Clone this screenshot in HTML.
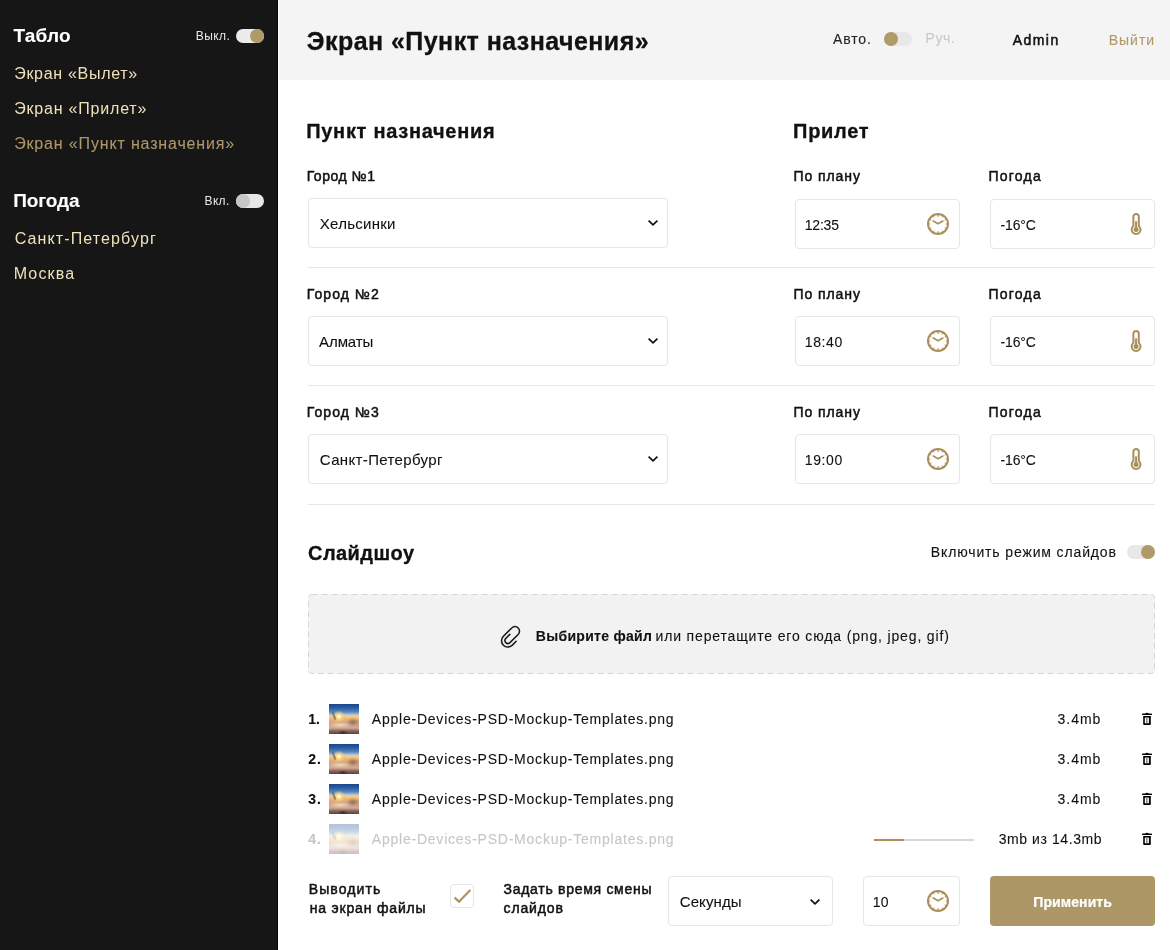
<!DOCTYPE html>
<html lang="ru">
<head>
<meta charset="utf-8">
<title>Экран «Пункт назначения»</title>
<style>
*{margin:0;padding:0;box-sizing:border-box}
html,body{width:1170px;height:950px;overflow:hidden;background:#fff;font-family:"Liberation Sans",sans-serif;color:#111}
.tx{position:absolute;white-space:nowrap;-webkit-text-stroke:0.1px currentColor}
.r{position:absolute}
.box{position:absolute;height:50px;border:1px solid #e6e6e6;border-radius:4px;background:#fff}
.tog{position:absolute;width:28px;height:14px;border-radius:7px;background:#e9e9e9}
.tog i{position:absolute;top:0;width:14px;height:14px;border-radius:50%;background:#b09a68}
.hr{position:absolute;left:308px;width:847px;height:1px;background:#e8e8e8}
.ic{position:absolute;overflow:visible}
.thumb{position:absolute;width:30px;height:30px;overflow:hidden;
 background:
  radial-gradient(circle at 10px 12.5px,#fffef4 0,#fff3c8 1.4px,rgba(255,212,120,.8) 2.8px,rgba(255,195,100,0) 6px),
  radial-gradient(ellipse 5px 3px at 14px 29px,rgba(40,25,25,.75),rgba(40,25,25,0)),
  radial-gradient(ellipse 7px 4px at 24px 18px,rgba(95,70,65,.6),rgba(95,70,65,0)),
  radial-gradient(ellipse 12px 3px at 11px 21px,rgba(255,236,205,.75),rgba(255,236,205,0)),
  linear-gradient(180deg,#1a4688 0,#2b5ea3 4px,#5a87bd 8px,#b0c0cc 10.5px,#ead2a4 12px,#f0bd72 14px,#deac78 17px,#caa28a 21px,#d4aa90 24px,#86625c 27px,#5a4242 30px)}
.thumb b{position:absolute;left:4px;top:8px;width:1.7px;height:8px;background:rgba(70,55,50,.5);transform:rotate(-22deg);border-radius:1px}
</style>
</head>
<body>
<div id="app" style="position:absolute;left:0;top:0;width:1170px;height:950px;background:#fff;will-change:transform">
<!-- sidebar -->
<div class="r" style="left:0;top:0;width:277px;height:950px;background:#161616"></div>
<div class="r" style="left:277px;top:0;width:1px;height:950px;background:#050505"></div>
<div class="tog" style="left:236px;top:29px;background:#ececec"><i style="left:14px"></i></div>
<div class="tog" style="left:236px;top:194px;background:#e6e6e6"><i style="left:0;background:#c6c6c6"></i></div>

<!-- header -->
<div class="r" style="left:279px;top:0;width:891px;height:80px;background:#f4f4f4"></div>
<div class="tog" style="left:884px;top:32px;background:#e8e8e8"><i style="left:0"></i></div>

<!-- form rows -->
<div class="box" style="left:308px;top:198px;width:360px"></div>
<div class="box" style="left:795px;top:199px;width:165px"></div>
<div class="box" style="left:990px;top:199px;width:165px"></div>
<div class="hr" style="top:267px"></div>
<div class="box" style="left:308px;top:316px;width:360px"></div>
<div class="box" style="left:795px;top:316px;width:165px"></div>
<div class="box" style="left:990px;top:316px;width:165px"></div>
<div class="hr" style="top:385px"></div>
<div class="box" style="left:308px;top:434px;width:360px"></div>
<div class="box" style="left:795px;top:434px;width:165px"></div>
<div class="box" style="left:990px;top:434px;width:165px"></div>
<div class="hr" style="top:504px"></div>

<!-- slideshow -->
<div class="tog" style="left:1127px;top:545px;background:#e8e8e8"><i style="left:14px"></i></div>
<svg class="ic" style="left:308px;top:594px" width="847" height="80"><rect x="0.5" y="0.5" width="846" height="79" rx="3" ry="3" fill="#f2f2f2" stroke="#d6d6d6" stroke-width="1" stroke-dasharray="6 4"/></svg>

<div class="thumb" style="left:329px;top:704px"><b></b></div>
<div class="thumb" style="left:329px;top:744px"><b></b></div>
<div class="thumb" style="left:329px;top:784px"><b></b></div>
<div class="thumb" style="left:329px;top:824px;opacity:.32"><b></b></div>
<div class="r" style="left:874px;top:839px;width:100px;height:2px;background:#d6d6d6"></div>
<div class="r" style="left:874px;top:839px;width:30px;height:2px;background:#ab8f5a"></div>

<!-- bottom -->
<div class="r" style="left:450px;top:884px;width:24px;height:24px;border:1px solid #e6e6e6;border-radius:4px"></div>
<div class="box" style="left:668px;top:876px;width:165px"></div>
<div class="box" style="left:863px;top:876px;width:97px"></div>
<div class="r" style="left:990px;top:876px;width:165px;height:50px;background:#ae9766;border-radius:4px"></div>

<!-- icons -->
<svg class="ic" style="left:646.5px;top:219.4px" width="12" height="8" viewBox="0 0 12 8"><polyline points="1.6,1.7 6,5.9 10.4,1.7" fill="none" stroke="#111" stroke-width="1.75"/></svg>
<svg class="ic" style="left:646.5px;top:337.4px" width="12" height="8" viewBox="0 0 12 8"><polyline points="1.6,1.7 6,5.9 10.4,1.7" fill="none" stroke="#111" stroke-width="1.75"/></svg>
<svg class="ic" style="left:646.5px;top:455.4px" width="12" height="8" viewBox="0 0 12 8"><polyline points="1.6,1.7 6,5.9 10.4,1.7" fill="none" stroke="#111" stroke-width="1.75"/></svg>
<svg class="ic" style="left:927px;top:213px" width="22" height="22" viewBox="0 0 22 22"><circle cx="11" cy="11" r="10" fill="none" stroke="#a88f5c" stroke-width="2"/><line x1="11.00" y1="3.80" x2="11.00" y2="1.80" stroke="#a88f5c" stroke-width="1.3"/><line x1="14.80" y1="4.42" x2="15.60" y2="3.03" stroke="#a88f5c" stroke-width="0.9"/><line x1="17.58" y1="7.20" x2="18.97" y2="6.40" stroke="#a88f5c" stroke-width="0.9"/><line x1="18.60" y1="11.00" x2="20.20" y2="11.00" stroke="#a88f5c" stroke-width="0.9"/><line x1="17.58" y1="14.80" x2="18.97" y2="15.60" stroke="#a88f5c" stroke-width="0.9"/><line x1="14.80" y1="17.58" x2="15.60" y2="18.97" stroke="#a88f5c" stroke-width="0.9"/><line x1="11.00" y1="18.20" x2="11.00" y2="20.20" stroke="#a88f5c" stroke-width="1.3"/><line x1="7.20" y1="17.58" x2="6.40" y2="18.97" stroke="#a88f5c" stroke-width="0.9"/><line x1="4.42" y1="14.80" x2="3.03" y2="15.60" stroke="#a88f5c" stroke-width="0.9"/><line x1="3.40" y1="11.00" x2="1.80" y2="11.00" stroke="#a88f5c" stroke-width="0.9"/><line x1="4.42" y1="7.20" x2="3.03" y2="6.40" stroke="#a88f5c" stroke-width="0.9"/><line x1="7.20" y1="4.42" x2="6.40" y2="3.03" stroke="#a88f5c" stroke-width="0.9"/><polyline points="6.3,8 11,10.8 15.9,8" fill="none" stroke="#a88f5c" stroke-width="1.6" stroke-linecap="round" stroke-linejoin="round"/></svg>
<svg class="ic" style="left:1130px;top:213px" width="12" height="23" viewBox="0 0 12 23"><path d="M3.4,13.06 V3.6 A2.7,2.7 0 0 1 8.8,3.6 V13.06 A4.45,4.45 0 1 1 3.4,13.06 Z" fill="none" stroke="#a88f5c" stroke-width="2"/><circle cx="6.1" cy="16.6" r="2.5" fill="#a88f5c"/><rect x="5.1" y="8.3" width="2" height="9" fill="#a88f5c"/></svg>
<svg class="ic" style="left:927px;top:330px" width="22" height="22" viewBox="0 0 22 22"><circle cx="11" cy="11" r="10" fill="none" stroke="#a88f5c" stroke-width="2"/><line x1="11.00" y1="3.80" x2="11.00" y2="1.80" stroke="#a88f5c" stroke-width="1.3"/><line x1="14.80" y1="4.42" x2="15.60" y2="3.03" stroke="#a88f5c" stroke-width="0.9"/><line x1="17.58" y1="7.20" x2="18.97" y2="6.40" stroke="#a88f5c" stroke-width="0.9"/><line x1="18.60" y1="11.00" x2="20.20" y2="11.00" stroke="#a88f5c" stroke-width="0.9"/><line x1="17.58" y1="14.80" x2="18.97" y2="15.60" stroke="#a88f5c" stroke-width="0.9"/><line x1="14.80" y1="17.58" x2="15.60" y2="18.97" stroke="#a88f5c" stroke-width="0.9"/><line x1="11.00" y1="18.20" x2="11.00" y2="20.20" stroke="#a88f5c" stroke-width="1.3"/><line x1="7.20" y1="17.58" x2="6.40" y2="18.97" stroke="#a88f5c" stroke-width="0.9"/><line x1="4.42" y1="14.80" x2="3.03" y2="15.60" stroke="#a88f5c" stroke-width="0.9"/><line x1="3.40" y1="11.00" x2="1.80" y2="11.00" stroke="#a88f5c" stroke-width="0.9"/><line x1="4.42" y1="7.20" x2="3.03" y2="6.40" stroke="#a88f5c" stroke-width="0.9"/><line x1="7.20" y1="4.42" x2="6.40" y2="3.03" stroke="#a88f5c" stroke-width="0.9"/><polyline points="6.3,8 11,10.8 15.9,8" fill="none" stroke="#a88f5c" stroke-width="1.6" stroke-linecap="round" stroke-linejoin="round"/></svg>
<svg class="ic" style="left:1130px;top:330px" width="12" height="23" viewBox="0 0 12 23"><path d="M3.4,13.06 V3.6 A2.7,2.7 0 0 1 8.8,3.6 V13.06 A4.45,4.45 0 1 1 3.4,13.06 Z" fill="none" stroke="#a88f5c" stroke-width="2"/><circle cx="6.1" cy="16.6" r="2.5" fill="#a88f5c"/><rect x="5.1" y="8.3" width="2" height="9" fill="#a88f5c"/></svg>
<svg class="ic" style="left:927px;top:448px" width="22" height="22" viewBox="0 0 22 22"><circle cx="11" cy="11" r="10" fill="none" stroke="#a88f5c" stroke-width="2"/><line x1="11.00" y1="3.80" x2="11.00" y2="1.80" stroke="#a88f5c" stroke-width="1.3"/><line x1="14.80" y1="4.42" x2="15.60" y2="3.03" stroke="#a88f5c" stroke-width="0.9"/><line x1="17.58" y1="7.20" x2="18.97" y2="6.40" stroke="#a88f5c" stroke-width="0.9"/><line x1="18.60" y1="11.00" x2="20.20" y2="11.00" stroke="#a88f5c" stroke-width="0.9"/><line x1="17.58" y1="14.80" x2="18.97" y2="15.60" stroke="#a88f5c" stroke-width="0.9"/><line x1="14.80" y1="17.58" x2="15.60" y2="18.97" stroke="#a88f5c" stroke-width="0.9"/><line x1="11.00" y1="18.20" x2="11.00" y2="20.20" stroke="#a88f5c" stroke-width="1.3"/><line x1="7.20" y1="17.58" x2="6.40" y2="18.97" stroke="#a88f5c" stroke-width="0.9"/><line x1="4.42" y1="14.80" x2="3.03" y2="15.60" stroke="#a88f5c" stroke-width="0.9"/><line x1="3.40" y1="11.00" x2="1.80" y2="11.00" stroke="#a88f5c" stroke-width="0.9"/><line x1="4.42" y1="7.20" x2="3.03" y2="6.40" stroke="#a88f5c" stroke-width="0.9"/><line x1="7.20" y1="4.42" x2="6.40" y2="3.03" stroke="#a88f5c" stroke-width="0.9"/><polyline points="6.3,8 11,10.8 15.9,8" fill="none" stroke="#a88f5c" stroke-width="1.6" stroke-linecap="round" stroke-linejoin="round"/></svg>
<svg class="ic" style="left:1130px;top:448px" width="12" height="23" viewBox="0 0 12 23"><path d="M3.4,13.06 V3.6 A2.7,2.7 0 0 1 8.8,3.6 V13.06 A4.45,4.45 0 1 1 3.4,13.06 Z" fill="none" stroke="#a88f5c" stroke-width="2"/><circle cx="6.1" cy="16.6" r="2.5" fill="#a88f5c"/><rect x="5.1" y="8.3" width="2" height="9" fill="#a88f5c"/></svg>
<svg class="ic" style="left:808.6px;top:897.5px" width="12" height="8" viewBox="0 0 12 8"><polyline points="1.6,1.7 6,5.9 10.4,1.7" fill="none" stroke="#111" stroke-width="1.75"/></svg>
<svg class="ic" style="left:927px;top:890px" width="22" height="22" viewBox="0 0 22 22"><circle cx="11" cy="11" r="10" fill="none" stroke="#a88f5c" stroke-width="2"/><line x1="11.00" y1="3.80" x2="11.00" y2="1.80" stroke="#a88f5c" stroke-width="1.3"/><line x1="14.80" y1="4.42" x2="15.60" y2="3.03" stroke="#a88f5c" stroke-width="0.9"/><line x1="17.58" y1="7.20" x2="18.97" y2="6.40" stroke="#a88f5c" stroke-width="0.9"/><line x1="18.60" y1="11.00" x2="20.20" y2="11.00" stroke="#a88f5c" stroke-width="0.9"/><line x1="17.58" y1="14.80" x2="18.97" y2="15.60" stroke="#a88f5c" stroke-width="0.9"/><line x1="14.80" y1="17.58" x2="15.60" y2="18.97" stroke="#a88f5c" stroke-width="0.9"/><line x1="11.00" y1="18.20" x2="11.00" y2="20.20" stroke="#a88f5c" stroke-width="1.3"/><line x1="7.20" y1="17.58" x2="6.40" y2="18.97" stroke="#a88f5c" stroke-width="0.9"/><line x1="4.42" y1="14.80" x2="3.03" y2="15.60" stroke="#a88f5c" stroke-width="0.9"/><line x1="3.40" y1="11.00" x2="1.80" y2="11.00" stroke="#a88f5c" stroke-width="0.9"/><line x1="4.42" y1="7.20" x2="3.03" y2="6.40" stroke="#a88f5c" stroke-width="0.9"/><line x1="7.20" y1="4.42" x2="6.40" y2="3.03" stroke="#a88f5c" stroke-width="0.9"/><polyline points="6.3,8 11,10.8 15.9,8" fill="none" stroke="#a88f5c" stroke-width="1.6" stroke-linecap="round" stroke-linejoin="round"/></svg>
<svg class="ic" style="left:1142px;top:712px" width="10" height="14" viewBox="0 0 10 14"><path d="M0,3.0 V2.3 Q0,1.6 0.8,1.6 H3.3 Q3.8,0.8 5,0.8 Q6.2,0.8 6.7,1.6 H9.2 Q10,1.6 10,2.3 V3.0 Z" fill="#000"/><path d="M1.2,4 H8.8 V11.9 Q8.8,12.9 7.8,12.9 H2.2 Q1.2,12.9 1.2,11.9 Z" fill="#000"/><rect x="2.8" y="5.6" width="4.1" height="5.6" fill="#fff"/><rect x="4.1" y="5.6" width="1.5" height="5.6" fill="#8a8a8a"/></svg>
<svg class="ic" style="left:1142px;top:752px" width="10" height="14" viewBox="0 0 10 14"><path d="M0,3.0 V2.3 Q0,1.6 0.8,1.6 H3.3 Q3.8,0.8 5,0.8 Q6.2,0.8 6.7,1.6 H9.2 Q10,1.6 10,2.3 V3.0 Z" fill="#000"/><path d="M1.2,4 H8.8 V11.9 Q8.8,12.9 7.8,12.9 H2.2 Q1.2,12.9 1.2,11.9 Z" fill="#000"/><rect x="2.8" y="5.6" width="4.1" height="5.6" fill="#fff"/><rect x="4.1" y="5.6" width="1.5" height="5.6" fill="#8a8a8a"/></svg>
<svg class="ic" style="left:1142px;top:792px" width="10" height="14" viewBox="0 0 10 14"><path d="M0,3.0 V2.3 Q0,1.6 0.8,1.6 H3.3 Q3.8,0.8 5,0.8 Q6.2,0.8 6.7,1.6 H9.2 Q10,1.6 10,2.3 V3.0 Z" fill="#000"/><path d="M1.2,4 H8.8 V11.9 Q8.8,12.9 7.8,12.9 H2.2 Q1.2,12.9 1.2,11.9 Z" fill="#000"/><rect x="2.8" y="5.6" width="4.1" height="5.6" fill="#fff"/><rect x="4.1" y="5.6" width="1.5" height="5.6" fill="#8a8a8a"/></svg>
<svg class="ic" style="left:1142px;top:832px" width="10" height="14" viewBox="0 0 10 14"><path d="M0,3.0 V2.3 Q0,1.6 0.8,1.6 H3.3 Q3.8,0.8 5,0.8 Q6.2,0.8 6.7,1.6 H9.2 Q10,1.6 10,2.3 V3.0 Z" fill="#000"/><path d="M1.2,4 H8.8 V11.9 Q8.8,12.9 7.8,12.9 H2.2 Q1.2,12.9 1.2,11.9 Z" fill="#000"/><rect x="2.8" y="5.6" width="4.1" height="5.6" fill="#fff"/><rect x="4.1" y="5.6" width="1.5" height="5.6" fill="#8a8a8a"/></svg>
<svg class="ic" style="left:490px;top:615px" width="40" height="40" viewBox="0 0 40 40"><path d="M26.2,26.3 L22.1,30.4 A6.3,6.3 0 0 1 13.2,21.5 L21.75,12.95 A4.5,4.5 0 0 1 28.15,19.45 L19.7,27.9 A3,3 0 0 1 15.5,23.7 L19.8,19.4" fill="none" stroke="#1a1a1a" stroke-width="1.55" stroke-linecap="round"/></svg>
<svg class="ic" style="left:450px;top:884px" width="24" height="24" viewBox="0 0 24 24"><polyline points="4.5,13.5 9,17.7 20.3,6" fill="none" stroke="#ad9563" stroke-width="2.3"/></svg>

<!-- texts -->
<div class="tx" style="left:13.50px;top:26px;font-size:19px;line-height:19px;letter-spacing:0.180px;color:#fff;font-weight:bold;-webkit-text-stroke:0.1px">Табло</div>
<div class="tx" style="left:195.80px;top:30px;font-size:12px;line-height:12px;letter-spacing:0.421px;color:#e8e8e8;-webkit-text-stroke:0">Выкл.</div>
<div class="tx" style="left:14.20px;top:66px;font-size:16px;line-height:16px;letter-spacing:0.702px;color:#f0e1bd;-webkit-text-stroke:0">Экран «Вылет»</div>
<div class="tx" style="left:14.20px;top:101px;font-size:16px;line-height:16px;letter-spacing:0.804px;color:#f0e1bd;-webkit-text-stroke:0">Экран «Прилет»</div>
<div class="tx" style="left:14.20px;top:136px;font-size:16px;line-height:16px;letter-spacing:0.843px;color:#ad976a;-webkit-text-stroke:0.1px">Экран «Пункт назначения»</div>
<div class="tx" style="left:13.20px;top:191px;font-size:19px;line-height:19px;letter-spacing:-0.108px;color:#fff;font-weight:bold;-webkit-text-stroke:0.1px">Погода</div>
<div class="tx" style="left:204.60px;top:195px;font-size:12px;line-height:12px;letter-spacing:0.303px;color:#e8e8e8;-webkit-text-stroke:0">Вкл.</div>
<div class="tx" style="left:14.70px;top:231px;font-size:16px;line-height:16px;letter-spacing:1.118px;color:#f0e1bd;-webkit-text-stroke:0">Санкт-Петербург</div>
<div class="tx" style="left:13.70px;top:266px;font-size:16px;line-height:16px;letter-spacing:1.155px;color:#f0e1bd;-webkit-text-stroke:0">Москва</div>
<div class="tx" style="left:306.80px;top:29px;font-size:25px;line-height:25px;letter-spacing:0.444px;color:#111;font-weight:bold;-webkit-text-stroke:0.3px">Экран «Пункт назначения»</div>
<div class="tx" style="left:833.10px;top:32px;font-size:14px;line-height:14px;letter-spacing:0.848px;color:#222">Авто.</div>
<div class="tx" style="left:925.50px;top:31px;font-size:14px;line-height:14px;letter-spacing:0.556px;color:#c9c9c9">Руч.</div>
<div class="tx" style="left:1012.80px;top:33px;font-size:14px;line-height:14px;letter-spacing:1.426px;color:#111;-webkit-text-stroke:0.5px">Admin</div>
<div class="tx" style="left:1108.70px;top:33px;font-size:14px;line-height:14px;letter-spacing:0.992px;color:#b09a68">Выйти</div>
<div class="tx" style="left:306.20px;top:121px;font-size:20px;line-height:20px;letter-spacing:0.710px;color:#111;font-weight:bold;-webkit-text-stroke:0.3px">Пункт назначения</div>
<div class="tx" style="left:793.10px;top:121px;font-size:20px;line-height:20px;letter-spacing:0.683px;color:#111;font-weight:bold;-webkit-text-stroke:0.3px">Прилет</div>
<div class="tx" style="left:306.70px;top:169px;font-size:14px;line-height:14px;letter-spacing:0.533px;color:#111;-webkit-text-stroke:0.5px">Город №1</div>
<div class="tx" style="left:793.60px;top:169px;font-size:14px;line-height:14px;letter-spacing:0.899px;color:#111;-webkit-text-stroke:0.5px">По плану</div>
<div class="tx" style="left:988.50px;top:169px;font-size:14px;line-height:14px;letter-spacing:1.241px;color:#111;-webkit-text-stroke:0.5px">Погода</div>
<div class="tx" style="left:319.80px;top:216px;font-size:15px;line-height:15px;letter-spacing:0.257px;color:#111">Хельсинки</div>
<div class="tx" style="left:804.80px;top:218px;font-size:14px;line-height:14px;letter-spacing:-0.212px;color:#111">12:35</div>
<div class="tx" style="left:1000.50px;top:218px;font-size:14px;line-height:14px;letter-spacing:-0.158px;color:#111">-16°C</div>
<div class="tx" style="left:306.70px;top:287px;font-size:14px;line-height:14px;letter-spacing:1.075px;color:#111;-webkit-text-stroke:0.5px">Город №2</div>
<div class="tx" style="left:793.60px;top:287px;font-size:14px;line-height:14px;letter-spacing:0.899px;color:#111;-webkit-text-stroke:0.5px">По плану</div>
<div class="tx" style="left:988.50px;top:287px;font-size:14px;line-height:14px;letter-spacing:1.241px;color:#111;-webkit-text-stroke:0.5px">Погода</div>
<div class="tx" style="left:319.10px;top:334px;font-size:15px;line-height:15px;letter-spacing:-0.111px;color:#111">Алматы</div>
<div class="tx" style="left:804.80px;top:335px;font-size:14px;line-height:14px;letter-spacing:0.613px;color:#111">18:40</div>
<div class="tx" style="left:1000.50px;top:335px;font-size:14px;line-height:14px;letter-spacing:-0.158px;color:#111">-16°C</div>
<div class="tx" style="left:306.70px;top:405px;font-size:14px;line-height:14px;letter-spacing:1.075px;color:#111;-webkit-text-stroke:0.5px">Город №3</div>
<div class="tx" style="left:793.60px;top:405px;font-size:14px;line-height:14px;letter-spacing:0.899px;color:#111;-webkit-text-stroke:0.5px">По плану</div>
<div class="tx" style="left:988.50px;top:405px;font-size:14px;line-height:14px;letter-spacing:1.241px;color:#111;-webkit-text-stroke:0.5px">Погода</div>
<div class="tx" style="left:319.80px;top:452px;font-size:15px;line-height:15px;letter-spacing:0.359px;color:#111">Санкт-Петербург</div>
<div class="tx" style="left:804.80px;top:453px;font-size:14px;line-height:14px;letter-spacing:0.613px;color:#111">19:00</div>
<div class="tx" style="left:1000.50px;top:453px;font-size:14px;line-height:14px;letter-spacing:-0.158px;color:#111">-16°C</div>
<div class="tx" style="left:308.00px;top:543px;font-size:20px;line-height:20px;letter-spacing:0.445px;color:#111;font-weight:bold;-webkit-text-stroke:0.3px">Слайдшоу</div>
<div class="tx" style="left:930.80px;top:545px;font-size:14px;line-height:14px;letter-spacing:0.865px;color:#111">Включить режим слайдов</div>
<div class="tx" style="left:535.80px;top:629px;font-size:14px;line-height:14px;letter-spacing:0.296px;color:#111;font-weight:bold">Выбирите файл</div>
<div class="tx" style="left:655.50px;top:629px;font-size:14px;line-height:14px;letter-spacing:0.848px;color:#111">или перетащите его сюда (png, jpeg, gif)</div>
<div class="tx" style="left:308.20px;top:712px;font-size:14px;line-height:14px;letter-spacing:0.000px;color:#111;font-weight:bold">1.</div>
<div class="tx" style="left:371.80px;top:712px;font-size:14px;line-height:14px;letter-spacing:0.775px;color:#111">Apple-Devices-PSD-Mockup-Templates.png</div>
<div class="tx" style="left:1057.60px;top:712px;font-size:14px;line-height:14px;letter-spacing:0.969px;color:#111">3.4mb</div>
<div class="tx" style="left:308.20px;top:752px;font-size:14px;line-height:14px;letter-spacing:1.014px;color:#111;font-weight:bold">2.</div>
<div class="tx" style="left:371.80px;top:752px;font-size:14px;line-height:14px;letter-spacing:0.775px;color:#111">Apple-Devices-PSD-Mockup-Templates.png</div>
<div class="tx" style="left:1057.60px;top:752px;font-size:14px;line-height:14px;letter-spacing:0.969px;color:#111">3.4mb</div>
<div class="tx" style="left:308.20px;top:792px;font-size:14px;line-height:14px;letter-spacing:1.014px;color:#111;font-weight:bold">3.</div>
<div class="tx" style="left:371.80px;top:792px;font-size:14px;line-height:14px;letter-spacing:0.775px;color:#111">Apple-Devices-PSD-Mockup-Templates.png</div>
<div class="tx" style="left:1057.60px;top:792px;font-size:14px;line-height:14px;letter-spacing:0.969px;color:#111">3.4mb</div>
<div class="tx" style="left:308.20px;top:832px;font-size:14px;line-height:14px;letter-spacing:1.014px;color:#c6c6c6;font-weight:bold">4.</div>
<div class="tx" style="left:371.80px;top:832px;font-size:14px;line-height:14px;letter-spacing:0.775px;color:#c6c6c6">Apple-Devices-PSD-Mockup-Templates.png</div>
<div class="tx" style="left:998.70px;top:832px;font-size:14px;line-height:14px;letter-spacing:0.578px;color:#111">3mb из 14.3mb</div>
<div class="tx" style="left:308.70px;top:882px;font-size:14px;line-height:14px;letter-spacing:1.106px;color:#111;-webkit-text-stroke:0.5px">Выводить</div>
<div class="tx" style="left:309.70px;top:901px;font-size:14px;line-height:14px;letter-spacing:0.826px;color:#111;-webkit-text-stroke:0.5px">на экран файлы</div>
<div class="tx" style="left:503.50px;top:882px;font-size:14px;line-height:14px;letter-spacing:0.716px;color:#111;-webkit-text-stroke:0.5px">Задать время смены</div>
<div class="tx" style="left:503.50px;top:901px;font-size:14px;line-height:14px;letter-spacing:0.878px;color:#111;-webkit-text-stroke:0.5px">слайдов</div>
<div class="tx" style="left:679.70px;top:894px;font-size:15px;line-height:15px;letter-spacing:0.110px;color:#111">Секунды</div>
<div class="tx" style="left:872.80px;top:895px;font-size:14px;line-height:14px;letter-spacing:0.114px;color:#111">10</div>
<div class="tx" style="left:1033.30px;top:895px;font-size:14px;line-height:14px;letter-spacing:0.090px;color:#fff;font-weight:bold;-webkit-text-stroke:0.2px">Применить</div>
</div>
</body>
</html>
